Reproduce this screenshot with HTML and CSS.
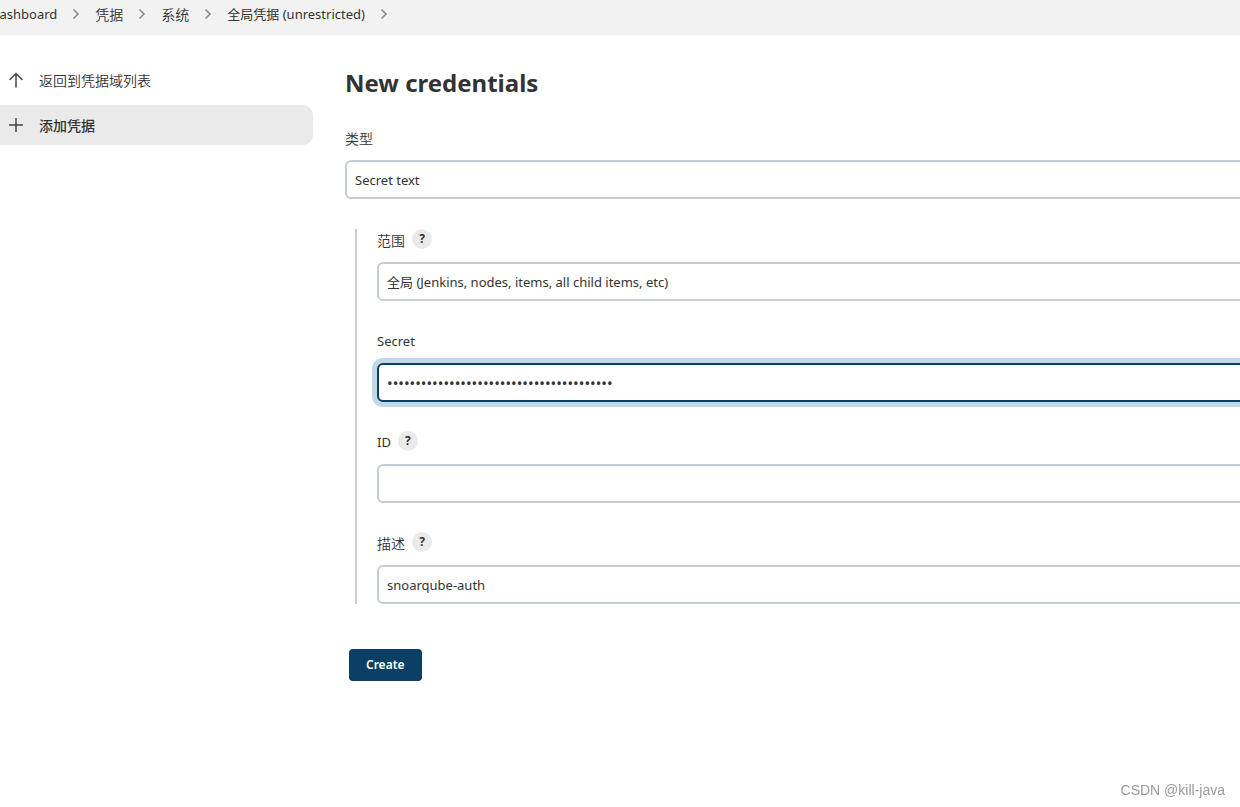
FILE: index.html
```html
<!DOCTYPE html>
<html lang="zh-CN">
<head>
<meta charset="utf-8">
<title>New credentials</title>
<link rel="stylesheet" href="styles.css">
</head>
<body>
<nav class="breadcrumbs" aria-label="Breadcrumb">
  <a class="latin" href="#">Dashboard</a>
  <svg class="chevron" viewBox="0 0 8 12"><path d="M1.500 1.500 6 6l-4.500 4.500"/></svg>
  <a href="#">凭据</a>
  <svg class="chevron" viewBox="0 0 8 12"><path d="M1.500 1.500 6 6l-4.500 4.500"/></svg>
  <a href="#">系统</a>
  <svg class="chevron" viewBox="0 0 8 12"><path d="M1.500 1.500 6 6l-4.500 4.500"/></svg>
  <a class="latin" href="#">全局凭据 (unrestricted)</a>
  <svg class="chevron" viewBox="0 0 8 12"><path d="M1.500 1.500 6 6l-4.500 4.500"/></svg>
</nav>
<div class="page">
  <aside class="side">
    <a class="task" href="#">
      <svg class="task-icon" viewBox="0 0 16 16"><path d="M8 15.500V1.500M1.500 8 8 1.500 14.500 8"/></svg>
      返回到凭据域列表
    </a>
    <a class="task task-active" href="#" aria-current="page">
      <svg class="task-icon" viewBox="0 0 16 16"><path d="M8 1v14M1 8h14"/></svg>
      添加凭据
    </a>
  </aside>
  <main class="main">
    <h1>New credentials</h1>
    <form class="form">
      <div class="field">
        <div class="label-row"><label for="kind">类型</label></div>
        <select id="kind" class="control"><option>Secret text</option></select>
      </div>
      <div class="group">
        <div class="field">
          <div class="label-row"><label for="scope">范围</label><button type="button" class="help" aria-label="Help for scope">?</button></div>
          <select id="scope" class="control"><option>全局 (Jenkins, nodes, items, all child items, etc)</option></select>
        </div>
        <div class="field">
          <div class="label-row"><label class="latin" for="secret">Secret</label></div>
          <input id="secret" class="control control-focused" type="password" value="0123456789012345678901234567890123456789">
        </div>
        <div class="field">
          <div class="label-row"><label class="latin" for="cid">ID</label><button type="button" class="help" aria-label="Help for ID">?</button></div>
          <input id="cid" class="control" type="text">
        </div>
        <div class="field">
          <div class="label-row"><label for="desc">描述</label><button type="button" class="help" aria-label="Help for description">?</button></div>
          <input id="desc" class="control" type="text" value="snoarqube-auth">
        </div>
      </div>
      <button type="submit" class="create">Create</button>
    </form>
  </main>
</div>
<div class="watermark">CSDN @kill-java</div>
</body>
</html>
```
FILE: styles.css
```css
* {
  box-sizing: border-box;
}

body {
  margin: 0;
  min-height: 100vh;
  overflow: hidden;
  background: #fff;
  color: #333;
  font: 350 14px/20px "Noto Sans CJK SC", sans-serif;
}

a {
  color: inherit;
  text-decoration: none;
}

svg {
  flex: none;
  fill: none;
  stroke: #444;
}

.breadcrumbs {
  display: flex;
  align-items: center;
  gap: 15px;
  height: 35px;
  margin-left: -10px;
  padding-bottom: 7px;
  background: #f2f2f2;
  white-space: nowrap;
}

.latin {
  font: 400 13px/20px "Noto Sans", "Noto Sans CJK SC", sans-serif;
}

.chevron {
  width: 8px;
  height: 12px;
  stroke: #888;
  stroke-width: 1.5;
}

.page {
  display: grid;
  grid-template-columns: 313px 1fr;
  gap: 32px;
  padding-top: 25px;
}

.side {
  display: flex;
  flex-direction: column;
  gap: 5px;
}

.task {
  display: flex;
  align-items: center;
  gap: 15px;
  height: 40px;
  padding-left: 8px;
  border-radius: 0 10px 10px 0;
}

.task-active {
  background: #eaeaea;
  font-weight: 500;
}

.task-icon {
  width: 16px;
  height: 16px;
  stroke-width: 1.5;
}

.main {
  min-width: 0;
  margin-right: -16px;
}

h1 {
  margin: 7px 0 28px;
  font: 700 24px/32px "Noto Sans", sans-serif;
}

.label-row {
  display: flex;
  align-items: center;
  gap: 7px;
  height: 20px;
  margin-bottom: 13px;
}

.label-row label {
  padding-top: 2px;
}

.help {
  width: 20px;
  height: 20px;
  padding: 0;
  border: 0;
  border-radius: 50%;
  background: #eaeaea;
  color: #333;
  font: 700 12px/20px "Noto Sans", sans-serif;
}

.control {
  display: block;
  width: 100%;
  height: 39px;
  padding: 0 8px;
  border: 2px solid #c3cdd2;
  border-radius: 6px;
  outline: 0;
  appearance: none;
  background: #fff;
  color: #333;
  font: 13px/20px "Noto Sans", "Noto Sans CJK SC", sans-serif;
}

.control-focused {
  border-color: #0b3f63;
  box-shadow: 0 0 0 5px #c1d9e7;
  font-size: 15px;
}

.group {
  display: flex;
  flex-direction: column;
  gap: 29px;
  margin: 30px 0 45px 10px;
  padding-left: 20px;
  border-left: 2px solid #c3cdd2;
}

.create {
  height: 32px;
  margin-left: 4px;
  padding: 0 17px;
  border: 0;
  border-radius: 4px;
  background: #0b3f63;
  color: #fff;
  font: 600 12px/20px "Noto Sans", sans-serif;
}

.watermark {
  position: fixed;
  right: 15px;
  bottom: 8px;
  color: #999;
  font: 14px/18px "Liberation Sans", sans-serif;
}
```
